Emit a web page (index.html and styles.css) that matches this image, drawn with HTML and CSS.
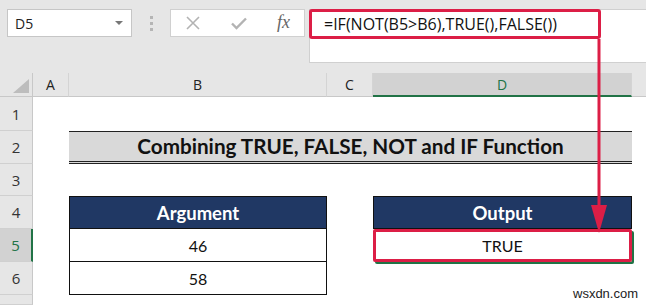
FILE: index.html
```html
<!DOCTYPE html>
<html lang="en">
<head>
    <meta charset="UTF-8">
    <title>Combining TRUE, FALSE, NOT and IF Function</title>
    <link rel="stylesheet" href="styles.css">
</head>
<body>
    <div class="app">
        <div class="toolbar">
            <div class="name-box">
                <span>D5</span>
                <span class="caret"></span>
            </div>
            <div class="grip"><i></i><i></i><i></i></div>
            <div class="buttons">
                <svg width="16" height="16" viewBox="0 0 16 16"><path d="M2 2L14 14M14 2L2 14" stroke="#b3b3b3" stroke-width="1.6" fill="none"/></svg>
                <svg width="18" height="16" viewBox="0 0 18 16"><path d="M2 8.5L6.5 13L16 3.5" stroke="#b3b3b3" stroke-width="2.4" fill="none"/></svg>
                <span class="fx">fx</span>
            </div>
            <div class="formula-bar">
                <div class="formula">=IF(NOT(B5&gt;B6),TRUE(),FALSE())</div>
            </div>
        </div>

        <div class="sheet">
            <div class="corner"><span class="tri"></span></div>
            <div class="col-head">A</div>
            <div class="col-head">B</div>
            <div class="col-head">C</div>
            <div class="col-head active">D</div>
            <div class="col-head rest"></div>

            <!-- row 1 -->
            <div class="row-head">1</div>
            <div class="cell span5"></div>

            <!-- row 2 -->
            <div class="row-head">2</div>
            <div class="cell"></div>
            <div class="cell title">Combining TRUE, FALSE, NOT and IF Function</div>
            <div class="cell"></div>

            <!-- row 3 -->
            <div class="row-head">3</div>
            <div class="cell span5"></div>

            <!-- row 4 -->
            <div class="row-head">4</div>
            <div class="cell"></div>
            <div class="cell th">Argument</div>
            <div class="cell"></div>
            <div class="cell th">Output</div>
            <div class="cell"></div>

            <!-- row 5 -->
            <div class="row-head active">5</div>
            <div class="cell"></div>
            <div class="cell td">46</div>
            <div class="cell"></div>
            <div class="cell td selected">TRUE</div>
            <div class="cell"></div>

            <!-- row 6 -->
            <div class="row-head">6</div>
            <div class="cell"></div>
            <div class="cell td">58</div>
            <div class="cell span3"></div>

            <!-- row 7 -->
            <div class="row-head"></div>
            <div class="cell span5"></div>
        </div>

        <svg class="arrow" width="20" height="200" viewBox="0 0 20 200">
            <path d="M10 0V170" stroke="#dc1e46" stroke-width="3" fill="none"/>
            <path d="M2 166L18 166L10 194Z" fill="#dc1e46"/>
        </svg>

        <div class="watermark">wsxdn.com</div>
    </div>
</body>
</html>
```

FILE: styles.css
```css
body {
    margin: 0;
    font-family: 'Open Sans', 'Noto Sans', sans-serif;
    background: #fff;
}

.app {
    position: relative;
    width: 646px;
    height: 305px;
    overflow: hidden;
}

.toolbar {
    display: flex;
    align-items: flex-start;
    background: #e6e6e6;
    height: 73px;
    padding: 9px 0 0 7px;
    box-sizing: border-box;
}

.name-box {
    width: 125px;
    height: 28px;
    box-sizing: border-box;
    background: #fff;
    border: 1px solid #c6c6c6;
    display: flex;
    align-items: center;
    justify-content: space-between;
    padding: 0 8px 0 7px;
    font-size: 14px;
    color: #222;
}

.caret {
    width: 0;
    height: 0;
    border-left: 4px solid transparent;
    border-right: 4px solid transparent;
    border-top: 4px solid #777;
}

.grip {
    width: 38px;
    height: 28px;
    display: flex;
    flex-direction: column;
    align-items: center;
    justify-content: center;
    gap: 3px;
}

.grip i {
    width: 3px;
    height: 3px;
    background: #b5b5b5;
}

.buttons {
    width: 135px;
    height: 28px;
    box-sizing: border-box;
    background: #fff;
    border: 1px solid #d0d0d0;
    display: flex;
    align-items: center;
    justify-content: space-between;
    padding: 0 14px 0 14px;
    margin-right: 4px;
}

.fx {
    font-family: 'Liberation Serif', serif;
    font-style: italic;
    font-size: 18px;
    color: #666;
    margin-top: -2px;
}

.formula-bar {
    flex: 1;
    height: 52px;
    background: #fff;
    border: 1px solid #d0d0d0;
    border-right: none;
}

.formula {
    width: 292px;
    height: 30px;
    box-sizing: border-box;
    margin: -1px 0 0 -1px;
    border: 3px solid #dc1e46;
    border-radius: 3px;
    padding: 1px 0 0 12px;
    font-size: 16px;
    color: #111;
}

.sheet {
    display: grid;
    grid-template-columns: 33px 36px 258px 46px 259px 1fr;
    grid-template-rows: 24px 34px 33px 32px 33px 33px 33px 1fr;
    height: 232px;
    background: #fff;
}

.corner {
    background: #e6e6e6;
    border-right: 1px solid #c8c8c8;
    border-bottom: 1px solid #c8c8c8;
    position: relative;
}

.tri {
    position: absolute;
    right: 3px;
    bottom: 3px;
    border-left: 16px solid transparent;
    border-bottom: 14px solid #bdbdbd;
}

.col-head {
    background: #e6e6e6;
    border-right: 1px solid #d4d4d4;
    border-bottom: 1px solid #c8c8c8;
    display: flex;
    align-items: center;
    justify-content: center;
    font-size: 14px;
    color: #222;
}

.col-head.active {
    background: #d2d2d2;
    color: #217346;
    border-bottom: 2px solid #217346;
}

.col-head.rest {
    border-right: none;
}

.row-head {
    background: #e6e6e6;
    border-right: 1px solid #c8c8c8;
    border-bottom: 1px solid #d0d0d0;
    display: flex;
    align-items: center;
    justify-content: center;
    font-size: 15px;
    color: #333;
}

.row-head.active {
    background: #d2d2d2;
    color: #217346;
    border-right: 2px solid #217346;
}

.cell {
    font-family: Lato, 'Open Sans', sans-serif;
    display: flex;
    align-items: center;
    justify-content: center;
    font-size: 16px;
    color: #111;
    box-sizing: border-box;
}

.span5 {
    grid-column: span 5;
}

.span3 {
    grid-column: span 3;
}

.title {
    grid-column: span 3;
    background: #d9d9d9;
    border-top: 1px solid #222;
    border-bottom: 3px double #222;
    font-weight: bold;
    font-size: 20.7px;
    padding-bottom: 2px;
}

.th {
    background: #203864;
    color: #fff;
    font-weight: bold;
    font-size: 18.5px;
    border: 1px solid #111;
}

.td {
    border: 1px solid #111;
    border-top: none;
}

.selected {
    border: 3px solid #dc1e46;
    border-radius: 2px;
    box-shadow: 2px 2px 0 #217346;
}

.arrow {
    position: absolute;
    left: 589px;
    top: 39px;
}

.watermark {
    position: absolute;
    left: 573px;
    top: 286px;
    font-family: 'Liberation Sans', sans-serif;
    font-size: 13px;
    color: #222;
}
```
